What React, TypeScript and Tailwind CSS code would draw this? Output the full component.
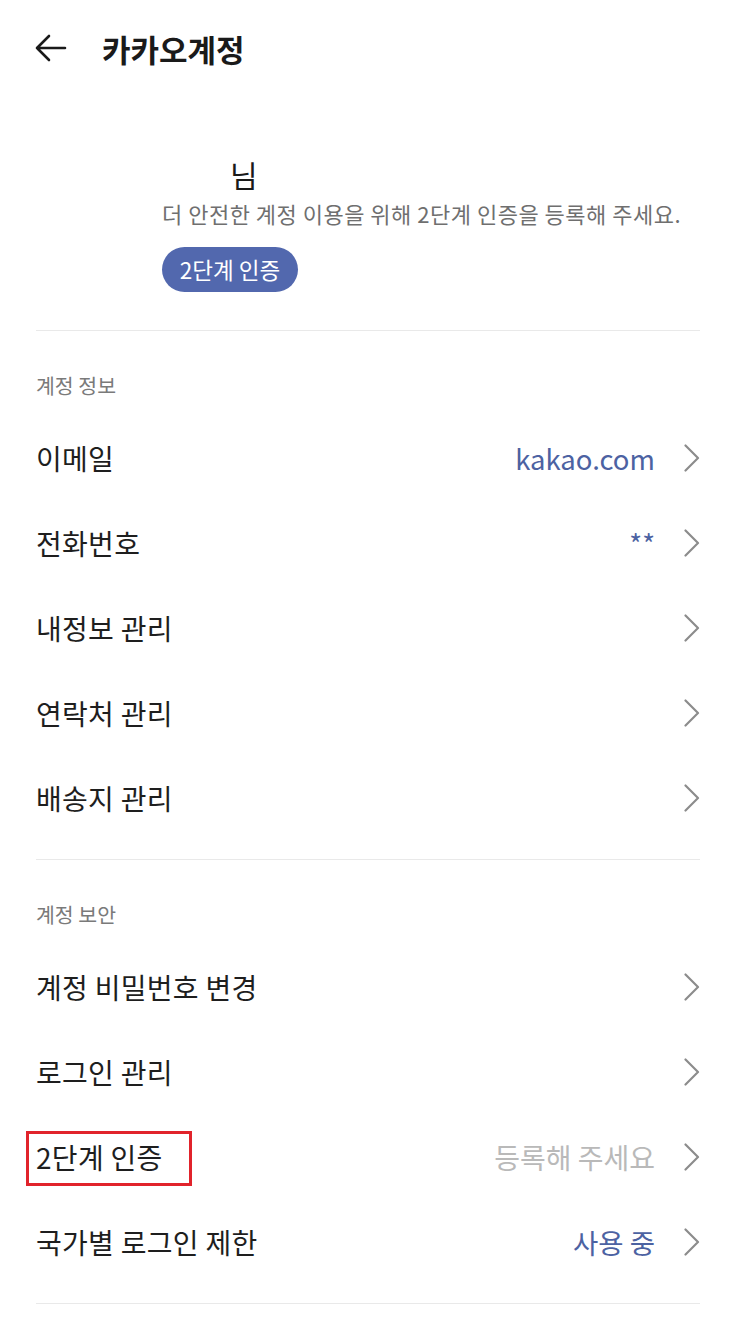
import React from "react";

type Row = {
  label: string;
  value?: string;
  tone?: "blue" | "gray";
  marked?: boolean;
};

const infoRows: Row[] = [
  { label: "이메일", value: "kakao.com", tone: "blue" },
  { label: "전화번호", value: "**", tone: "blue" },
  { label: "내정보 관리" },
  { label: "연락처 관리" },
  { label: "배송지 관리" },
];

const securityRows: Row[] = [
  { label: "계정 비밀번호 변경" },
  { label: "로그인 관리" },
  { label: "2단계 인증", value: "등록해 주세요", tone: "gray", marked: true },
  { label: "국가별 로그인 제한", value: "사용 중", tone: "blue" },
];

const Chevron = () => (
  <svg width="16" height="28" viewBox="0 0 16 28" fill="none" className="shrink-0">
    <path d="M1.5 1.5L14 14L1.5 26.5" stroke="#8c8c8c" strokeWidth="2.2" strokeLinecap="round" strokeLinejoin="round" />
  </svg>
);

const MenuRow: React.FC<{ row: Row }> = ({ row }) => (
  <div className="flex items-center h-[85px]">
    <div className="flex-1">
      <span className="relative inline-block text-[28px] leading-[36px] text-[#1e1e1e] tracking-[0.3px]">
        {row.label}
        {row.marked && (
          <span className="absolute left-[-10px] right-[-29px] top-[-8px] bottom-[-11px] border-[3px] border-[#e1232b]" />
        )}
      </span>
    </div>
    {row.value && (
      <span
        className={`leading-[36px] mr-[29px] ${
          row.tone === "gray" ? "text-[#b9b9b9] text-[28px]" : "text-[#4c62a2] text-[27.5px]"
        }`}
      >
        {row.value}
      </span>
    )}
    <Chevron />
  </div>
);

const Section: React.FC<{ title: string; rows: Row[] }> = ({ title, rows }) => (
  <section className="border-t border-[#e9e9e9] pt-[40px] pb-[19px]">
    <div className="text-[20.5px] leading-[28px] text-[#7a7a7a]">{title}</div>
    <div className="mt-[16px]">
      {rows.map((row) => (
        <MenuRow key={row.label} row={row} />
      ))}
    </div>
  </section>
);

export default function App() {
  return (
    <div
      className="w-[733px] min-h-[1335px] bg-white pl-[36px] pr-[33px]"
      style={{ fontFamily: '"Noto Sans CJK KR", "Noto Sans", sans-serif' }}
    >
      <header className="flex items-center h-[96px]">
        <svg width="32" height="28" viewBox="0 0 32 28" fill="none" className="-ml-[1px]">
          <path d="M30 14H2M14 2L2 14L14 26" stroke="#1a1a1a" strokeWidth="2.6" strokeLinecap="round" strokeLinejoin="round" />
        </svg>
        <h1 className="ml-[35px] text-[31px] font-bold text-[#1a1a1a] leading-none">카카오계정</h1>
      </header>

      <div className="pl-[126px] pt-[59px] pb-[38px]">
        <div className="pl-[68px] text-[30px] leading-[38px] text-[#1a1a1a]">님</div>
        <p className="mt-[5px] text-[22px] leading-[30px] text-[#6f6f6f] whitespace-nowrap tracking-[0.5px]">
          더 안전한 계정 이용을 위해 2단계 인증을 등록해 주세요.
        </p>
        <button className="mt-[19px] h-[45px] w-[136px] rounded-full bg-[#5268ae] text-white text-[22.5px] leading-none">
          2단계 인증
        </button>
      </div>

      <Section title="계정 정보" rows={infoRows} />
      <Section title="계정 보안" rows={securityRows} />
      <div className="border-t border-[#e9e9e9]" />
    </div>
  );
}
